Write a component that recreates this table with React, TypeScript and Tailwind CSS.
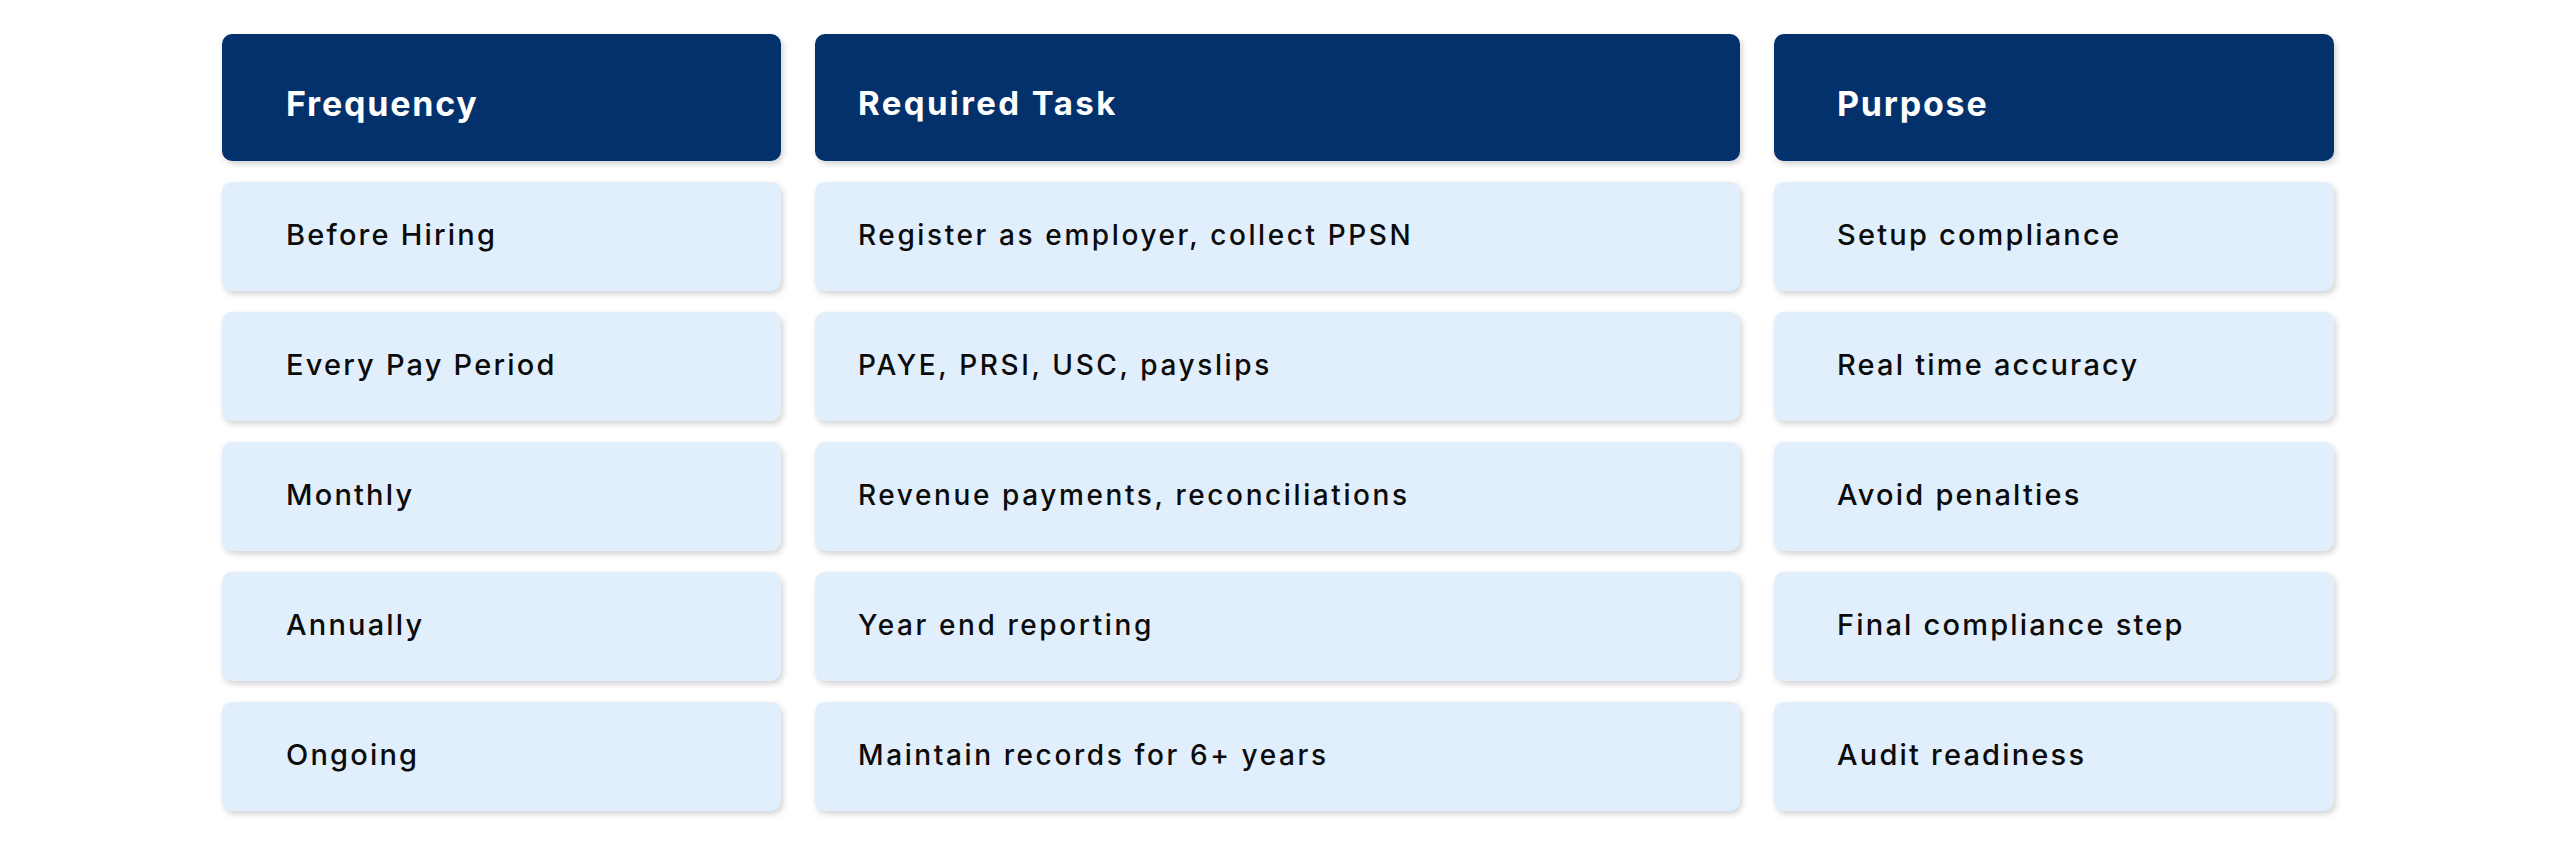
import React from 'react';

const rows = [
  ['Before Hiring', 'Register as employer, collect PPSN', 'Setup compliance'],
  ['Every Pay Period', 'PAYE, PRSI, USC, payslips', 'Real time accuracy'],
  ['Monthly', 'Revenue payments, reconciliations', 'Avoid penalties'],
  ['Annually', 'Year end reporting', 'Final compliance step'],
  ['Ongoing', 'Maintain records for 6+ years', 'Audit readiness'],
];

const font = "font-['Inter','Lato',sans-serif]";
const cardShadow = 'shadow-[2px_3px_6px_rgba(0,0,0,0.18)]';
const head = `rounded-[10px] bg-[#02316b] ${cardShadow} flex items-center pt-[12px] text-white font-bold ${font}`;
const cell = `rounded-[10px] bg-[#e1effc] ${cardShadow} flex items-center pb-[3px] text-[#0b0b0b] font-medium ${font}`;

export default function App() {
  return (
    <div className="w-[2560px] h-[855px] bg-white pl-[222px] pt-[34px]">
      <div className="grid grid-cols-[559px_925px_560px] gap-x-[34px] gap-y-[21px] grid-rows-[127px] auto-rows-[109px]">
        <div className={`${head} pl-[64px] text-[34px] tracking-[1.8px]`}>Frequency</div>
        <div className={`${head} pl-[43px] text-[33px] tracking-[2.4px]`}>Required Task</div>
        <div className={`${head} pl-[63px] text-[34px] tracking-[1.8px]`}>Purpose</div>
        {rows.map((r, i) => (
          <React.Fragment key={i}>
            <div className={`${cell} pl-[64px] text-[29px] tracking-[2.2px]`}>{r[0]}</div>
            <div className={`${cell} pl-[43px] text-[28px] tracking-[2.6px]`}>{r[1]}</div>
            <div className={`${cell} pl-[63px] text-[29px] tracking-[2.2px]`}>{r[2]}</div>
          </React.Fragment>
        ))}
      </div>
    </div>
  );
}
